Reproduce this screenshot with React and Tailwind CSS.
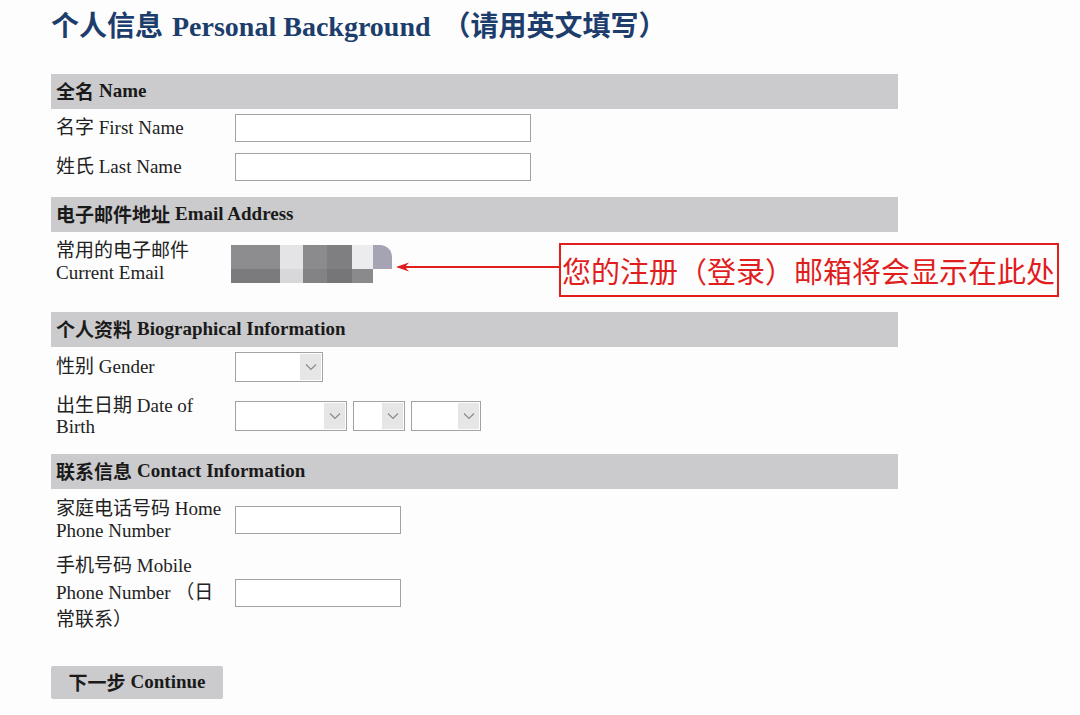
import React from "react";

const serif = { fontFamily: '"Liberation Serif", "Noto Sans CJK SC", serif' };

function SectionHeader({ zh, en }) {
  return (
    <div className="w-[847px] h-[35px] bg-[#cbcbcd] flex items-center pl-[5px] text-[19px] font-bold text-[#1a1a1a]">
      <span className="font-['Noto_Sans_CJK_SC'] font-bold">{zh}</span>
      <span className="ml-[5px]">{en}</span>
    </div>
  );
}

function TextInput({ w }) {
  return <div className={`${w} h-[28px] border border-[#a3a3a3] bg-white`} />;
}

function Select({ w }) {
  return (
    <div className={`${w} h-[30px] border border-[#a3a3a3] bg-white flex justify-end p-[1px]`}>
      <div className="w-[21px] h-full bg-[#e6e6e6] flex items-center justify-center">
        <svg width="12" height="8" viewBox="0 0 12 8">
          <path d="M1 1.5 L6 6.5 L11 1.5" fill="none" stroke="#8a8a8a" strokeWidth="1.2" />
        </svg>
      </div>
    </div>
  );
}

function Label({ children, className = "" }) {
  return <div className={`w-[184px] pl-[5px] text-[19px] text-[#222] ${className}`}>{children}</div>;
}

export default function App() {
  return (
    <div className="min-h-[715px] bg-[#fdfdfd] pl-[51px] pt-[7px]" style={serif}>
      <h1 className="text-[28px] font-bold text-[#1d3d6c] leading-[34px] flex items-baseline whitespace-nowrap">
        <span className="font-['Noto_Sans_CJK_SC'] text-[28px]">个人信息</span>
        <span className="ml-[9px]">Personal Background</span>
        <span className="ml-[12px] font-['Noto_Sans_CJK_SC'] text-[28px]">（请用英文填写）</span>
      </h1>

      <div className="mt-[30px]">
        <SectionHeader zh="全名" en="Name" />
        <div className="flex items-center mt-[5px]">
          <Label>名字 First Name</Label>
          <TextInput w="w-[296px]" />
        </div>
        <div className="flex items-center mt-[10px]">
          <Label>姓氏 Last Name</Label>
          <TextInput w="w-[296px]" />
        </div>
      </div>

      <div className="mt-[16px]">
        <SectionHeader zh="电子邮件地址" en="Email Address" />
        <div className="flex items-start mt-[7px]">
          <Label className="leading-[22px] pt-[1px]">
            常用的电子邮件
            <br />
            Current Email
          </Label>
          <div className="flex w-[161px] h-[38px] -ml-[4px] mt-[6px] blur-[0.6px]">
            <div className="w-[49px] flex flex-col"><div className="h-[24px] bg-[#8d8d8f]" /><div className="flex-1 bg-[#7b7b7d]" /></div>
            <div className="w-[23px] flex flex-col"><div className="h-[24px] bg-[#e4e4e6]" /><div className="flex-1 bg-[#d8d8da]" /></div>
            <div className="w-[24px] flex flex-col"><div className="h-[24px] bg-[#8b8b8d]" /><div className="flex-1 bg-[#838385]" /></div>
            <div className="w-[25px] flex flex-col"><div className="h-[24px] bg-[#7f7f81]" /><div className="flex-1 bg-[#767678]" /></div>
            <div className="w-[21px] flex flex-col"><div className="h-[24px] bg-[#ececee]" /><div className="flex-1 bg-[#8a8a8c]" /></div>
            <div className="w-[19px] flex flex-col"><div className="h-[24px] bg-[#a4a4b2] rounded-tr-[12px]" /><div className="flex-1" /></div>
          </div>
          <svg width="167" height="12" viewBox="0 0 167 12" className="mt-[22px]">
            <line x1="6" y1="6" x2="167" y2="6" stroke="#e01e1e" strokeWidth="2" />
            <path d="M4 6 L17 1.5 L13 6 L17 10.5 Z" fill="#e01e1e" />
          </svg>
          <div className="h-[54px] w-[500px] border-2 border-[#e01e1e] flex items-center pl-[1px] mt-[4px] text-[29px] leading-none text-[#e01e1e] font-['Noto_Sans_CJK_SC'] whitespace-nowrap">
            您的注册（登录）邮箱将会显示在此处
          </div>
        </div>
      </div>

      <div className="mt-[15px]">
        <SectionHeader zh="个人资料" en="Biographical Information" />
        <div className="flex items-center mt-[5px]">
          <Label>性别 Gender</Label>
          <Select w="w-[88px]" />
        </div>
        <div className="flex items-center mt-[13px]">
          <Label className="leading-[21px]">
            出生日期 Date of
            <br />
            Birth
          </Label>
          <div className="flex gap-[6px]">
            <Select w="w-[112px]" />
            <Select w="w-[52px]" />
            <Select w="w-[70px]" />
          </div>
        </div>
      </div>

      <div className="mt-[17px]">
        <SectionHeader zh="联系信息" en="Contact Information" />
        <div className="flex items-center mt-[9px]">
          <Label className="leading-[22px]">
            家庭电话号码 Home
            <br />
            Phone Number
          </Label>
          <TextInput w="w-[166px]" />
        </div>
        <div className="flex items-center mt-[10px]">
          <Label className="leading-[27px]">
            手机号码 Mobile
            <br />
            Phone Number （日
            <br />
            常联系）
          </Label>
          <TextInput w="w-[166px]" />
        </div>
      </div>

      <button className="mt-[33px] w-[172px] h-[33px] bg-[#cbcbcd] rounded-[2px] text-[19px] font-bold text-[#1a1a1a] flex items-center justify-center">
        <span className="font-['Noto_Sans_CJK_SC']">下一步</span>
        <span className="ml-[5px]">Continue</span>
      </button>
    </div>
  );
}
